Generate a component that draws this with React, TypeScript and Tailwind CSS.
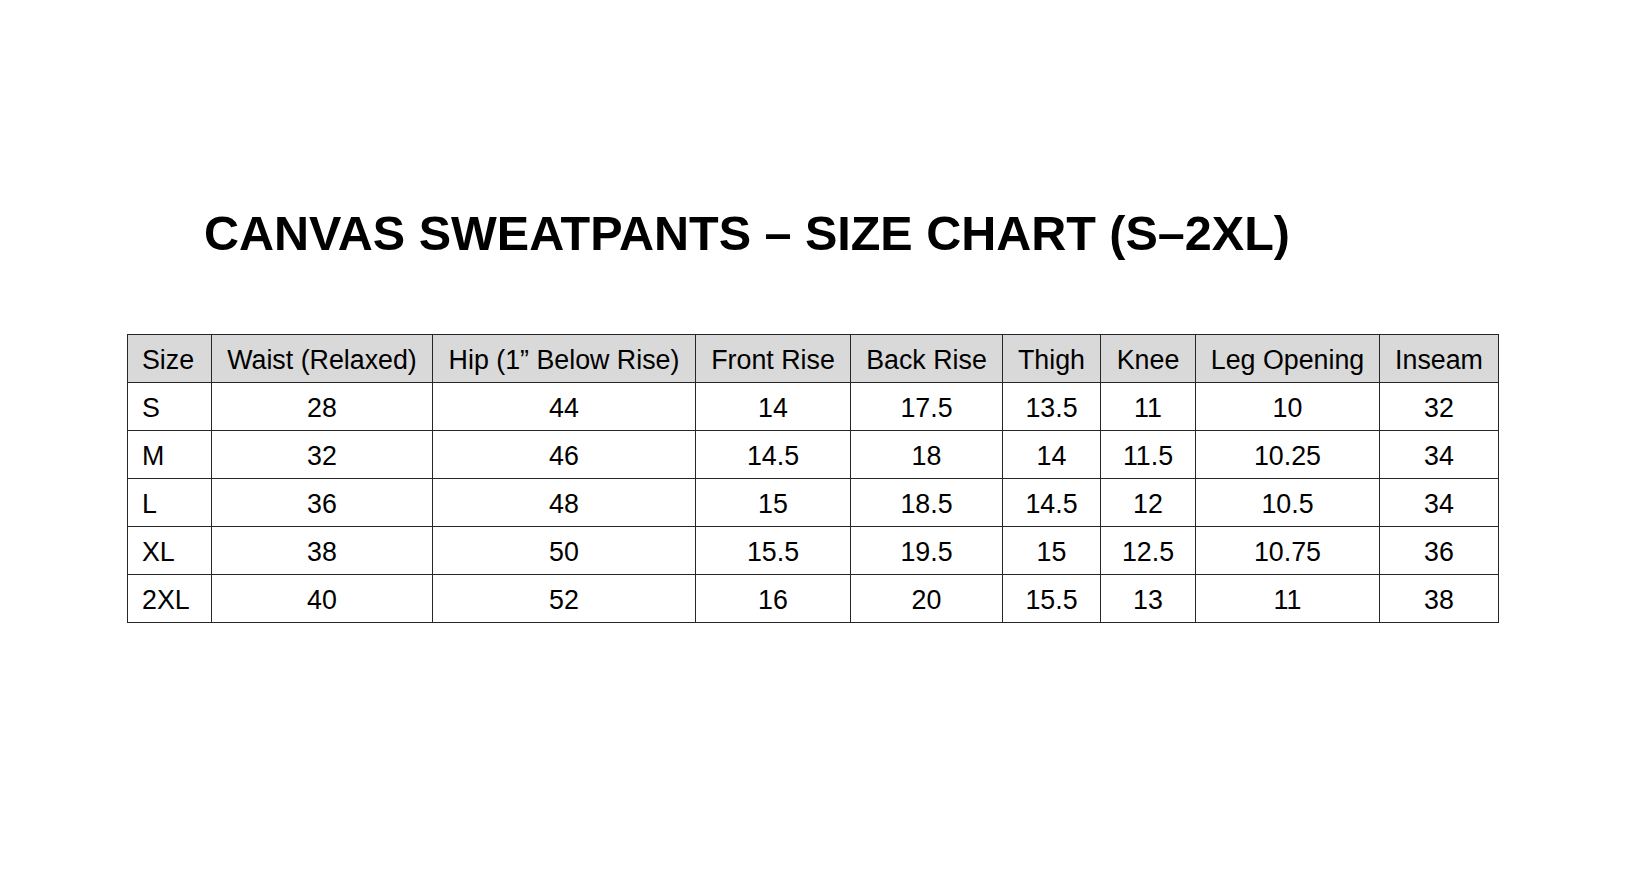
import React from "react";

const headers = [
  "Size",
  "Waist (Relaxed)",
  "Hip (1\u201D Below Rise)",
  "Front Rise",
  "Back Rise",
  "Thigh",
  "Knee",
  "Leg Opening",
  "Inseam",
];

const rows: string[][] = [
  ["S", "28", "44", "14", "17.5", "13.5", "11", "10", "32"],
  ["M", "32", "46", "14.5", "18", "14", "11.5", "10.25", "34"],
  ["L", "36", "48", "15", "18.5", "14.5", "12", "10.5", "34"],
  ["XL", "38", "50", "15.5", "19.5", "15", "12.5", "10.75", "36"],
  ["2XL", "40", "52", "16", "20", "15.5", "13", "11", "38"],
];

export default function App() {
  return (
    <div
      className="w-[1626px] h-[892px] bg-white text-black flex flex-col"
      style={{ fontFamily: '"Liberation Sans", Arial, sans-serif' }}
    >
      <h1 className="mt-[209px] ml-[204px] text-[48.5px] leading-[48px] font-bold tracking-normal whitespace-nowrap">
        CANVAS SWEATPANTS – SIZE CHART (S–2XL)
      </h1>
      <div className="mt-[77px] flex justify-center">
        <table className="table-fixed border-collapse w-[1371px] text-[26.8px] leading-[30px]">
          <colgroup>
            <col className="w-[84px]" />
            <col className="w-[221px]" />
            <col className="w-[263px]" />
            <col className="w-[155px]" />
            <col className="w-[152px]" />
            <col className="w-[98px]" />
            <col className="w-[95px]" />
            <col className="w-[184px]" />
            <col className="w-[119px]" />
          </colgroup>
          <thead>
            <tr className="h-[48px] bg-[#d9d9d9]">
              {headers.map((h, i) => (
                <th
                  key={h}
                  className={`border border-[#262626] font-normal whitespace-nowrap p-0 pt-[2px] ${
                    i === 0 ? "text-left pl-[14px]" : "text-center"
                  }`}
                >
                  {h}
                </th>
              ))}
            </tr>
          </thead>
          <tbody>
            {rows.map((r) => (
              <tr key={r[0]} className="h-[48px]">
                {r.map((c, i) => (
                  <td
                    key={i}
                    className={`border border-[#262626] p-0 pt-[2px] whitespace-nowrap ${
                      i === 0 ? "text-left pl-[14px]" : "text-center"
                    }`}
                  >
                    {c}
                  </td>
                ))}
              </tr>
            ))}
          </tbody>
        </table>
      </div>
    </div>
  );
}
